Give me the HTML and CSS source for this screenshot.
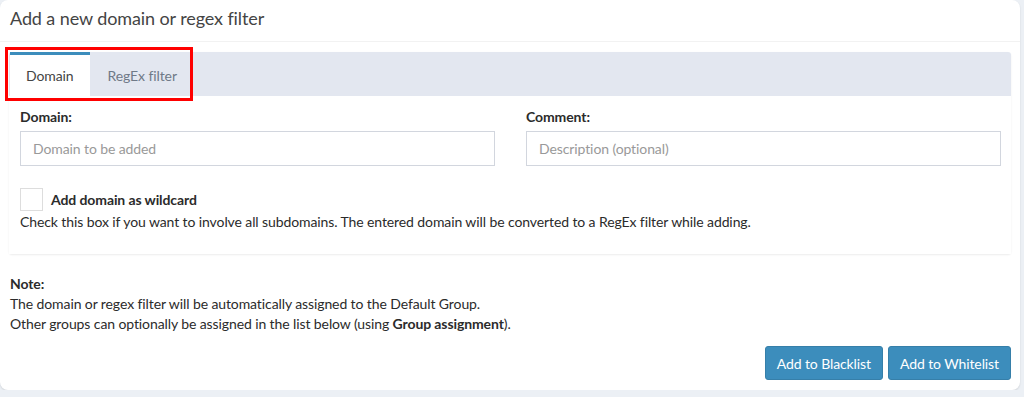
FILE: index.html
```html
<!DOCTYPE html>
<html lang="en">
<head>
  <meta charset="UTF-8"/>
  <title>Add a new domain or regex filter</title>
  <link rel="stylesheet" href="styles.css">
</head>
<body>
  <div class="box">
    <div class="box-header">
      <h3>Add a new domain or regex filter</h3>
    </div>
    <div class="box-body">
      <div class="tabs-wrap">
        <ul class="nav-tabs">
          <li class="tab active">Domain</li>
          <li class="tab">RegEx filter</li>
        </ul>
        <div class="highlight"></div>
        <div class="tab-content">
          <div class="row">
            <div class="field">
              <label>Domain:</label>
              <input type="text" placeholder="Domain to be added"/>
            </div>
            <div class="field">
              <label>Comment:</label>
              <input type="text" placeholder="Description (optional)"/>
            </div>
          </div>
          <div class="wildcard">
            <span class="check"></span>
            <strong>Add domain as wildcard</strong>
          </div>
          <p class="help">Check this box if you want to involve all subdomains. The entered domain will be converted to a RegEx filter while adding.</p>
        </div>
      </div>

      <div class="note">
        <strong>Note:</strong><br>
        The domain or regex filter will be automatically assigned to the Default Group.<br>
        Other groups can optionally be assigned in the list below (using <strong>Group assignment</strong>).
      </div>

      <div class="actions">
        <button class="btn">Add to Blacklist</button>
        <button class="btn">Add to Whitelist</button>
      </div>
    </div>
  </div>
</body>
</html>
```

FILE: styles.css
```css
body {
  margin: 0;
  background-color: #ecf0f5;
  font-family: Lato, 'Liberation Sans', sans-serif;
  font-size: 14px;
  letter-spacing: -0.1px;
  color: #2b2b2b;
}

.box {
  width: 1020px;
  height: 390px;
  background-color: #fff;
  border-radius: 8px;
  box-shadow: 0 1px 2px rgba(0, 0, 0, 0.12);
  box-sizing: border-box;
}

.box-header {
  height: 42px;
  box-sizing: border-box;
  border-bottom: 1px solid #f2f2f2;
  padding: 7px 10px 0;
}

.box-header h3 {
  margin: 0;
  font-size: 18px;
  font-weight: 400;
  color: #444;
}

.box-body {
  padding: 10px 9px 0 9px;
}

.tabs-wrap {
  position: relative;
  border-radius: 3px;
  box-shadow: 0 1px 2px rgba(0, 0, 0, 0.08);
  width: 1002px;
}

.nav-tabs {
  list-style: none;
  margin: 0;
  padding: 0;
  display: flex;
  background-color: #e3e7f0;
  height: 44px;
  border-radius: 3px 3px 0 0;
}

.tab {
  padding: 0 17px;
  display: flex;
  align-items: center;
  color: #6f7987;
  border-top: 3px solid transparent;
  margin-left: 1px;
}

.tab.active {
  background-color: #fff;
  color: #444;
  border-top-color: #3c8dbc;
  padding: 0 16px;
}

.highlight {
  position: absolute;
  left: -4px;
  top: -5px;
  width: 182px;
  height: 48px;
  border: 3px solid #f00;
}

.tab-content {
  padding: 12px 10px 8px 11px;
  background: #fff;
}

.row {
  display: flex;
  gap: 31px;
}

.field {
  flex: 0 0 475px;
}

.field label {
  display: block;
  font-weight: 700;
  margin-bottom: 6px;
}

.field input {
  width: 100%;
  height: 35px;
  box-sizing: border-box;
  border: 1px solid #d2d6de;
  padding: 6px 12px;
  font-family: inherit;
  font-size: 14px;
  letter-spacing: inherit;
}

.field input::placeholder {
  color: #999;
}

.wildcard {
  display: flex;
  align-items: center;
  gap: 8px;
  margin-top: 22px;
}

.check {
  width: 21px;
  height: 21px;
  border: 1px solid #ddd;
  display: inline-block;
}

.help {
  margin: 2px 0 16px;
}

.note {
  margin-top: 20px;
  line-height: 20px;
  padding-left: 1px;
}

.actions {
  display: flex;
  justify-content: flex-end;
  gap: 5px;
  margin-top: 12px;
  width: 1002px;
}

.btn {
  background-color: #3c8dbc;
  border: 1px solid #367fa9;
  color: #fff;
  border-radius: 3px;
  height: 34px;
  padding: 0 11px;
  font-family: inherit;
  font-size: 14px;
  letter-spacing: inherit;
}
```
